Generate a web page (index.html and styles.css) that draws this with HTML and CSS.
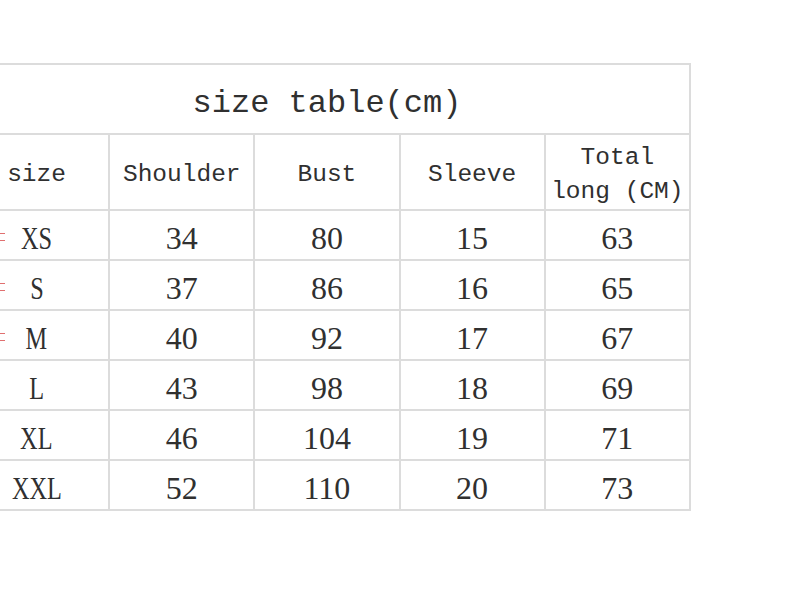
FILE: index.html
```html
<!DOCTYPE html>
<html>
<head>
<meta charset="utf-8">
<link rel="stylesheet" href="styles.css">
</head>
<body>
<div class="page">
  <table class="sizes">
    <colgroup>
      <col class="c"><col class="c"><col class="c"><col class="c"><col class="c">
    </colgroup>
    <tr class="title-row"><td colspan="5" class="title">size table(cm)</td></tr>
    <tr class="head-row">
      <td class="head">size</td>
      <td class="head">Shoulder</td>
      <td class="head">Bust</td>
      <td class="head">Sleeve</td>
      <td class="head two">Total<br>long (CM)</td>
    </tr>
    <tr class="data"><td class="sz"><span class="mark"></span><span class="lt">XS</span></td><td>34</td><td>80</td><td>15</td><td>63</td></tr>
    <tr class="data"><td class="sz"><span class="mark"></span><span class="lt">S</span></td><td>37</td><td>86</td><td>16</td><td>65</td></tr>
    <tr class="data"><td class="sz"><span class="mark"></span><span class="lt">M</span></td><td>40</td><td>92</td><td>17</td><td>67</td></tr>
    <tr class="data"><td class="sz"><span class="lt">L</span></td><td>43</td><td>98</td><td>18</td><td>69</td></tr>
    <tr class="data"><td class="sz"><span class="lt">XL</span></td><td>46</td><td>104</td><td>19</td><td>71</td></tr>
    <tr class="data"><td class="sz"><span class="lt">XXL</span></td><td>52</td><td>110</td><td>20</td><td>73</td></tr>
  </table>
</div>
</body>
</html>
```
FILE: styles.css
```css
html, body {
  margin: 0;
  padding: 0;
  background: #ffffff;
  overflow: hidden;
}
.page {
  padding-top: 63px;
  margin-left: -37px;
}
.sizes {
  border-collapse: collapse;
  table-layout: fixed;
  width: 728px;
  color: #303030;
}
.sizes col.c {
  width: 145px;
}
.sizes td {
  border: 2px solid #dcdcdc;
  text-align: center;
  vertical-align: middle;
  padding: 0;
}
.title-row td {
  height: 59px;
  font-family: "Liberation Mono", monospace;
  font-size: 32px;
  line-height: 40px;
  padding-top: 9px;
}
.head-row td {
  height: 68px;
  font-family: "Liberation Mono", monospace;
  font-size: 24.5px;
  line-height: 34px;
  padding-top: 6px;
}
.data td {
  height: 42px;
  font-family: "Liberation Serif", serif;
  font-size: 32px;
  line-height: 40px;
  padding-top: 6px;
}
.sz {
  position: relative;
}
.lt {
  display: inline-block;
  transform: scaleX(0.76);
}
.mark {
  position: absolute;
  left: 35px;
  top: 22px;
  width: 5px;
  height: 6px;
  border-top: 1px solid #e07070;
  border-bottom: 1px solid #e07070;
}
```
